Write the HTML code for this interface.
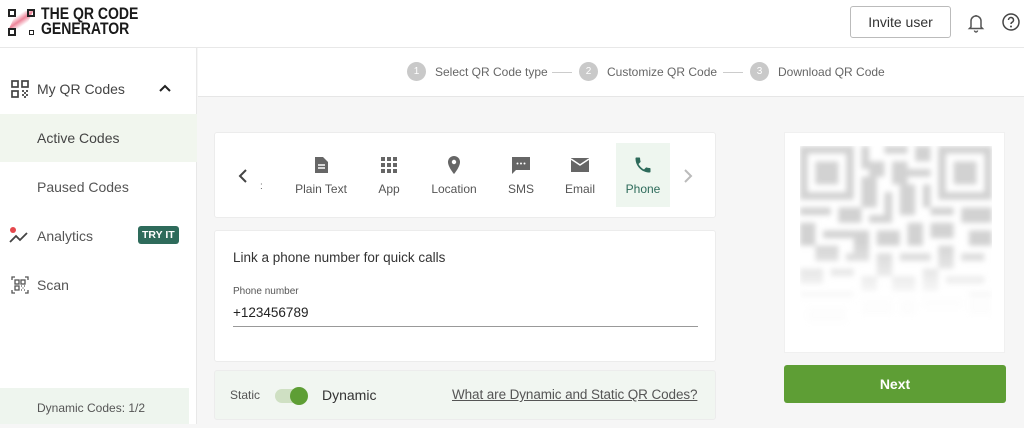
<!DOCTYPE html>
<html><head><meta charset="utf-8"><style>
*{box-sizing:border-box;margin:0;padding:0}
body{width:1024px;height:424px;overflow:hidden;background:#f6f6f6;font-family:"Liberation Sans",Arial,sans-serif;position:relative;color:#333}
.abs{position:absolute}
.header{left:0;top:0;width:1024px;height:48px;background:#fff;border-bottom:1px solid #e8e8e8}
.side{left:0;top:48px;width:197px;height:376px;background:#fff;border-right:1px solid #e8e8e8}
.steps{left:198px;top:48px;width:826px;height:49px;background:#fff;border-bottom:1px solid #e6e6e6}
.step{position:absolute;top:15px;font-size:12px;color:#666;display:flex;align-items:center;white-space:nowrap}
.step b{display:inline-block;width:19px;height:19px;border-radius:50%;background:#c9c9c9;color:#fff;font-size:10px;font-weight:normal;text-align:center;line-height:19px;margin-right:9px}
.line{position:absolute;top:72px;height:1px;width:20px;background:#ccc}
.nav{position:absolute;left:0;width:197px;height:48px;font-size:14px;color:#444;display:flex;align-items:center}
.card{background:#fff;border:1px solid #ececec;border-radius:3px}
.tab{position:absolute;top:0;height:85px;font-size:12px;color:#555;text-align:center;white-space:nowrap}
.tab svg{position:absolute;top:22px;left:50%;margin-left:-10px}
.tab span{position:absolute;top:49px;left:-10px;right:-10px}
</style></head><body>
<div class="abs header"></div>
<!-- logo -->
<div class="abs" style="left:8px;top:9px;width:28px;height:28px">
 <div class="abs" style="left:5px;top:2px;width:16px;height:18px;background:linear-gradient(135deg,rgba(230,80,110,0) 20%,rgba(230,80,110,.7) 50%,rgba(230,80,110,0) 80%);transform:skewX(-25deg)"></div>
 <div class="abs" style="left:0;top:0;width:8px;height:8px;border:2px solid #222"></div>
 <div class="abs" style="left:19px;top:0;width:8px;height:8px;border:2px solid #222"></div>
 <div class="abs" style="left:0;top:19px;width:8px;height:8px;border:2px solid #222"></div>
 <div class="abs" style="left:21px;top:21px;width:5px;height:5px;border:1.5px solid #222"></div>
</div>
<div class="abs" style="left:41px;top:7px;font-size:16.5px;font-weight:bold;line-height:15px;color:#1a1a1a;transform:scaleX(0.85);transform-origin:0 0">THE QR CODE<br>GENERATOR</div>
<div class="abs" style="left:850px;top:6px;width:101px;height:32px;border:1px solid #bbb;border-radius:3px;font-size:14px;color:#333;text-align:center;line-height:30px">Invite user</div>
<svg class="abs" style="left:966px;top:12px" width="20" height="22" viewBox="0 0 20 22"><path d="M5 15V9a5 5 0 0 1 10 0v6l1.5 1.5h-13z" fill="none" stroke="#555" stroke-width="1.5"/><path d="M8.5 18.5a1.5 1.5 0 0 0 3 0" fill="none" stroke="#555" stroke-width="1.4"/><path d="M10 3v1" stroke="#555" stroke-width="1.5"/></svg>
<svg class="abs" style="left:1001px;top:12px" width="20" height="20" viewBox="0 0 20 20"><circle cx="10" cy="10" r="8" fill="none" stroke="#444" stroke-width="1.5"/><path d="M7.5 8a2.5 2.5 0 1 1 3.5 2.3c-.7.4-1 .8-1 1.7" fill="none" stroke="#444" stroke-width="1.5"/><circle cx="10" cy="14.5" r="1" fill="#444"/></svg>

<div class="abs side">
 <div class="nav" style="top:17px"><svg style="margin-left:11px;margin-right:8px" width="18" height="18" viewBox="0 0 18 18" fill="none" stroke="#444" stroke-width="1.7"><rect x="1" y="1" width="6" height="6"/><rect x="11" y="1" width="6" height="6"/><rect x="1" y="11" width="6" height="6"/><path d="M11 11h2M15 11h2M13 13h2M11 15h2M15 15h2M13 17h2"/></svg>My QR Codes<svg style="position:absolute;left:158px" width="14" height="10" viewBox="0 0 14 10"><path d="M2 7l5-5 5 5" fill="none" stroke="#222" stroke-width="2"/></svg></div>
 <div class="nav" style="top:66px;background:#f1f6ee;padding-left:37px">Active Codes</div>
 <div class="nav" style="top:115px;padding-left:37px;color:#555">Paused Codes</div>
 <div class="nav" style="top:164px;color:#555"><svg style="margin-left:9px;margin-right:8px" width="20" height="18" viewBox="0 0 20 18"><path d="M1 15l6-6 4 4 7-7" fill="none" stroke="#444" stroke-width="1.8"/><circle cx="4" cy="3" r="3" fill="#e5484d"/></svg>Analytics<span style="position:absolute;left:138px;top:14px;background:#2e6b5b;color:#fff;font-size:10.5px;font-weight:bold;padding:3px 4px;border-radius:3px">TRY IT</span></div>
 <div class="nav" style="top:213px;color:#555"><svg style="margin-left:11px;margin-right:8px" width="18" height="18" viewBox="0 0 18 18" fill="none" stroke="#555" stroke-width="1.3"><path d="M1 4V1h3M14 1h3v3M1 14v3h3M17 14v3h-3"/><rect x="4" y="4" width="4" height="4"/><rect x="10" y="4" width="4" height="4"/><rect x="4" y="10" width="4" height="4"/><path d="M10 10h1M13 10h1M11.5 12h1M10 14h1M13 14h1"/></svg>Scan</div>
 <div class="abs" style="left:0;top:340px;width:189px;height:36px;background:#eef5ee;font-size:12px;color:#555;padding-left:37px;line-height:40px">Dynamic Codes: 1/2</div>
</div>

<div class="abs steps"></div>
<div class="step" style="left:407px;top:62px"><b>1</b>Select QR Code type</div>
<div class="line" style="left:552px"></div>
<div class="step" style="left:579px;top:62px"><b>2</b>Customize QR Code</div>
<div class="line" style="left:723px"></div>
<div class="step" style="left:750px;top:62px"><b>3</b>Download QR Code</div>

<!-- tabs card -->
<div class="abs card" style="left:214px;top:132px;width:502px;height:86px">
 <svg class="abs" style="left:22px;top:35px" width="12" height="16" viewBox="0 0 12 16"><path d="M9 2L3 8l6 6" fill="none" stroke="#444" stroke-width="2"/></svg>
 <span class="abs" style="left:45px;top:48px;font-size:10px;color:#666">:</span>
 <div class="tab" style="left:72px;width:68px"><svg width="20" height="20" viewBox="0 0 20 20"><path d="M4 2h8l5 5v11H4z" fill="#666"/><path d="M7 10h7M7 13h7" stroke="#fff" stroke-width="1.5"/></svg><span>Plain Text</span></div>
 <div class="tab" style="left:154px;width:40px"><svg width="20" height="20" viewBox="0 0 20 20" fill="#666"><rect x="2" y="2" width="4" height="4"/><rect x="8" y="2" width="4" height="4"/><rect x="14" y="2" width="4" height="4"/><rect x="2" y="8" width="4" height="4"/><rect x="8" y="8" width="4" height="4"/><rect x="14" y="8" width="4" height="4"/><rect x="2" y="14" width="4" height="4"/><rect x="8" y="14" width="4" height="4"/><rect x="14" y="14" width="4" height="4"/></svg><span>App</span></div>
 <div class="tab" style="left:208px;width:62px"><svg width="20" height="20" viewBox="0 0 20 20"><path d="M10 1a6 6 0 0 0-6 6c0 5 6 12 6 12s6-7 6-12a6 6 0 0 0-6-6z" fill="#666"/><circle cx="10" cy="7" r="2.2" fill="#fff"/></svg><span>Location</span></div>
 <div class="tab" style="left:284px;width:44px"><svg width="20" height="20" viewBox="0 0 20 20"><path d="M1 2h18v13H5l-4 4z" fill="#666"/><circle cx="6.5" cy="8.5" r="1" fill="#fff"/><circle cx="10" cy="8.5" r="1" fill="#fff"/><circle cx="13.5" cy="8.5" r="1" fill="#fff"/></svg><span>SMS</span></div>
 <div class="tab" style="left:342px;width:46px"><svg width="20" height="20" viewBox="0 0 20 20"><rect x="1" y="3" width="18" height="14" fill="#666"/><path d="M1 4l9 6 9-6" fill="none" stroke="#fff" stroke-width="1.5"/></svg><span>Email</span></div>
 <div class="tab" style="left:401px;width:54px;top:10px;height:64px;background:#eef6ef"><svg style="top:12px" width="20" height="20" viewBox="0 0 24 24"><path d="M6.6 10.8c1.4 2.8 3.8 5.1 6.6 6.6l2.2-2.2c.3-.3.7-.4 1-.2 1.1.4 2.300.6 3.6.6.6 0 1 .4 1 1V20c0 .6-.4 1-1 1C10.6 21 3 13.4 3 4c0-.6.4-1 1-1h3.5c.6 0 1 .4 1 1 0 1.3.2 2.5.6 3.6.1.3 0 .7-.2 1z" fill="#2e6b5b"/></svg><span style="top:39px;color:#2e6b5b">Phone</span></div>
 <svg class="abs" style="left:467px;top:35px" width="12" height="16" viewBox="0 0 12 16"><path d="M3 2l6 6-6 6" fill="none" stroke="#bbb" stroke-width="2"/></svg>
</div>

<!-- form card -->
<div class="abs card" style="left:214px;top:230px;width:502px;height:132px">
 <div class="abs" style="left:18px;top:19px;font-size:13.5px;color:#333">Link a phone number for quick calls</div>
 <div class="abs" style="left:18px;top:55px;font-size:10px;color:#555">Phone number</div>
 <div class="abs" style="left:18px;top:74px;font-size:13.5px;color:#222">+123456789</div>
 <div class="abs" style="left:18px;top:95px;width:465px;height:1px;background:#999"></div>
</div>

<!-- toggle bar -->
<div class="abs" style="left:214px;top:370px;width:502px;height:50px;background:#f1f6f1;border:1px solid #ececec;border-radius:3px">
 <div class="abs" style="left:15px;top:17px;font-size:12px;color:#555">Static</div>
 <div class="abs" style="left:60px;top:18px;width:32px;height:14px;border-radius:7px;background:#cfe0c3"></div>
 <div class="abs" style="left:75px;top:16px;width:18px;height:18px;border-radius:50%;background:#5e9e35"></div>
 <div class="abs" style="left:107px;top:16px;font-size:14px;color:#333">Dynamic</div>
 <div class="abs" style="left:237px;top:16px;font-size:13.5px;color:#555;text-decoration:underline;white-space:nowrap;letter-spacing:-0.1px">What are Dynamic and Static QR Codes?</div>
</div>

<!-- QR -->
<div class="abs" style="left:784px;top:132px;width:221px;height:221px;background:#fff;border:1px solid #f0f0f0"></div>
<svg class="abs" style="left:800px;top:146px" width="192" height="192" viewBox="0 0 25 25">
<defs><filter id="b"><feGaussianBlur stdDeviation="0.35"/></filter><linearGradient id="g" x1="0" y1="0" x2="0" y2="1"><stop offset="0.5" stop-color="#fff" stop-opacity="1"/><stop offset="0.8" stop-color="#fff" stop-opacity="0.05"/></linearGradient><mask id="m"><rect width="25" height="25" fill="url(#g)"/></mask></defs>
<g fill="#d2d2d2" filter="url(#b)" mask="url(#m)">
<path d="M0 0h7v7H0zM1 1v5h5V1zM2 2h3v3H2z" fill-rule="evenodd"/>
<path d="M18 0h7v7h-7zM19 1v5h5V1zM20 2h3v3h-3z" fill-rule="evenodd"/>
<rect x="8" y="0" width="1" height="3"/><rect x="9" y="2" width="2" height="2"/><rect x="11" y="0" width="3" height="1"/><rect x="12" y="2" width="2" height="3"/><rect x="15" y="0" width="2" height="2"/><rect x="14" y="3" width="3" height="1"/><rect x="8" y="4" width="2" height="4"/><rect x="11" y="6" width="1" height="3"/><rect x="13" y="5" width="2" height="4"/><rect x="16" y="5" width="1" height="3"/>
<rect x="0" y="8" width="4" height="1"/><rect x="5" y="8" width="3" height="2"/><rect x="9" y="9" width="3" height="1"/><rect x="17" y="8" width="3" height="1"/><rect x="21" y="8" width="4" height="2"/>
<rect x="0" y="10" width="2" height="3"/><rect x="3" y="11" width="4" height="1"/><rect x="7" y="11" width="2" height="3"/><rect x="10" y="11" width="3" height="2"/><rect x="14" y="10" width="2" height="3"/><rect x="17" y="10" width="3" height="2"/><rect x="22" y="11" width="3" height="2"/>
<rect x="2" y="13" width="3" height="2"/><rect x="6" y="14" width="3" height="1"/><rect x="10" y="14" width="2" height="3"/><rect x="13" y="14" width="4" height="1"/><rect x="18" y="13" width="2" height="3"/><rect x="21" y="14" width="3" height="1"/>
<rect x="0" y="16" width="3" height="2"/><rect x="4" y="16" width="3" height="1"/><rect x="8" y="17" width="2" height="2"/><rect x="12" y="17" width="3" height="2"/><rect x="16" y="16" width="2" height="3"/><rect x="19" y="17" width="5" height="1"/>
<rect x="0" y="19" width="7" height="1"/><rect x="8" y="20" width="4" height="2"/><rect x="13" y="20" width="2" height="2"/><rect x="16" y="20" width="5" height="1"/><rect x="22" y="19" width="3" height="3"/><rect x="1" y="21" width="5" height="2"/>
</g></svg>
<div class="abs" style="left:784px;top:365px;width:222px;height:38px;background:#5e9e35;border-radius:3px;color:#fff;font-size:14px;font-weight:bold;text-align:center;line-height:38px">Next</div>
</body></html>
